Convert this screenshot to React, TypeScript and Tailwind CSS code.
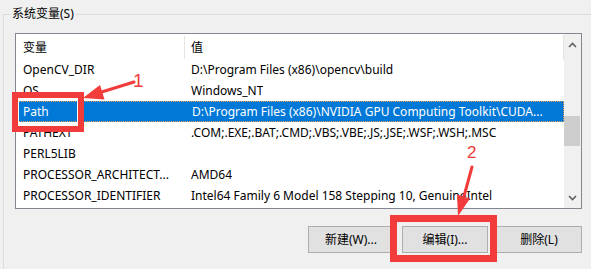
import React from 'react';

interface Row {
  name: string;
  value: string;
  selected?: boolean;
}

const rows: Row[] = [
  { name: 'OpenCV_DIR', value: 'D:\\Program Files (x86)\\opencv\\build' },
  { name: 'OS', value: 'Windows_NT' },
  { name: 'Path', value: 'D:\\Program Files (x86)\\NVIDIA GPU Computing Toolkit\\CUDA...', selected: true },
  { name: 'PATHEXT', value: '.COM;.EXE;.BAT;.CMD;.VBS;.VBE;.JS;.JSE;.WSF;.WSH;.MSC' },
  { name: 'PERL5LIB', value: '' },
  { name: 'PROCESSOR_ARCHITECT...', value: 'AMD64' },
  { name: 'PROCESSOR_IDENTIFIER', value: 'Intel64 Family 6 Model 158 Stepping 10, GenuineIntel' },
];

const font = "font-['Noto_Sans','Noto_Sans_CJK_SC',sans-serif]";

const App: React.FC = () => {
  return (
    <div className={`relative w-[591px] h-[269px] overflow-hidden bg-[#f0f0f0] text-[12px] text-black ${font}`}>
      {/* group box */}
      <div className="relative ml-[3px] mt-[14px] h-[260px] border-l border-t border-[#dcdcdc] pl-[11px] pt-[18px]">
        <span className="absolute -top-[9px] left-[6px] bg-[#f0f0f0] px-[2px] leading-[16px]">系统变量(S)</span>

        {/* list view */}
        <div className="flex w-[567px] h-[176px] border border-[#828790] bg-white">
          <div className="flex-1 flex flex-col">
            <div className="flex h-[25px] items-center border-r border-[#e5e5e5] mt-[1px] mb-[-1px]">
              <div className="w-[168px] pl-[7px]">变量</div>
              <div className="w-px h-[23px] bg-[#e5e5e5]" />
              <div className="pl-[6px]">值</div>
            </div>
            {rows.map((r) => (
              <div
                key={r.name}
                className={`flex h-[21px] items-center whitespace-nowrap ${
                  r.selected ? 'bg-[#0078d7] text-white border border-dotted border-[#e8a04a]' : ''
                }`}
              >
                <div className={`w-[168px] overflow-hidden ${r.selected ? 'pl-[6px]' : 'pl-[7px]'}`}>{r.name}</div>
                <div className="w-px" />
                <div className="pl-[6px] overflow-hidden">{r.value}</div>
              </div>
            ))}
          </div>

          {/* scrollbar */}
          <div className="relative w-[17px] bg-[#f0f0f0]">
            <svg className="absolute left-[4px] top-[8px]" width="9" height="6" viewBox="0 0 9 6">
              <path d="M1 5 L4.5 1.5 L8 5" fill="none" stroke="#606060" strokeWidth="1.6" />
            </svg>
            <div className="absolute left-0 top-[82px] w-[16px] h-[30px] bg-[#cdcdcd]" />
            <svg className="absolute left-[4px] bottom-[7px]" width="9" height="6" viewBox="0 0 9 6">
              <path d="M1 1 L4.5 4.5 L8 1" fill="none" stroke="#606060" strokeWidth="1.6" />
            </svg>
          </div>
        </div>

        {/* buttons */}
        <div className="flex justify-end gap-[8px] w-[567px] mt-[17px]">
          {['新建(W)...', '编辑(I)...', '删除(L)'].map((b) => (
            <button
              key={b}
              className="w-[86px] h-[27px] border border-[#adadad] bg-[#e1e1e1] flex items-center justify-center"
            >
              {b}
            </button>
          ))}
        </div>
      </div>

      {/* annotations */}
      <div className="absolute left-[12px] top-[92px] w-[72px] h-[40px] border-[6px] border-[#f23b3b] shadow-[inset_0_0_0_1px_white]" />
      <div className="absolute left-[390px] top-[215px] w-[107px] h-[47px] border-[7px] border-[#f23b3b]" />

      <svg className="absolute left-0 top-0" width="591" height="269">
        <line x1="134" y1="82" x2="100" y2="92.5" stroke="#f23b3b" strokeWidth="3" strokeLinecap="round" />
        <polygon points="83,98 104.5,99.5 100,85" fill="#f23b3b" />
        <line x1="472" y1="167" x2="463.5" y2="198" stroke="#f23b3b" strokeWidth="3" strokeLinecap="round" />
        <polygon points="458,216 470,198.5 457,194.5" fill="#f23b3b" />
      </svg>
      <span className="absolute left-[133px] top-[70px] text-[19px] leading-[22px] text-[#f23b3b] font-['Liberation_Sans',sans-serif]">1</span>
      <span className="absolute left-[467px] top-[143px] text-[17px] leading-[20px] text-[#f23b3b] font-['Liberation_Sans',sans-serif]">2</span>
    </div>
  );
};

export default App;
